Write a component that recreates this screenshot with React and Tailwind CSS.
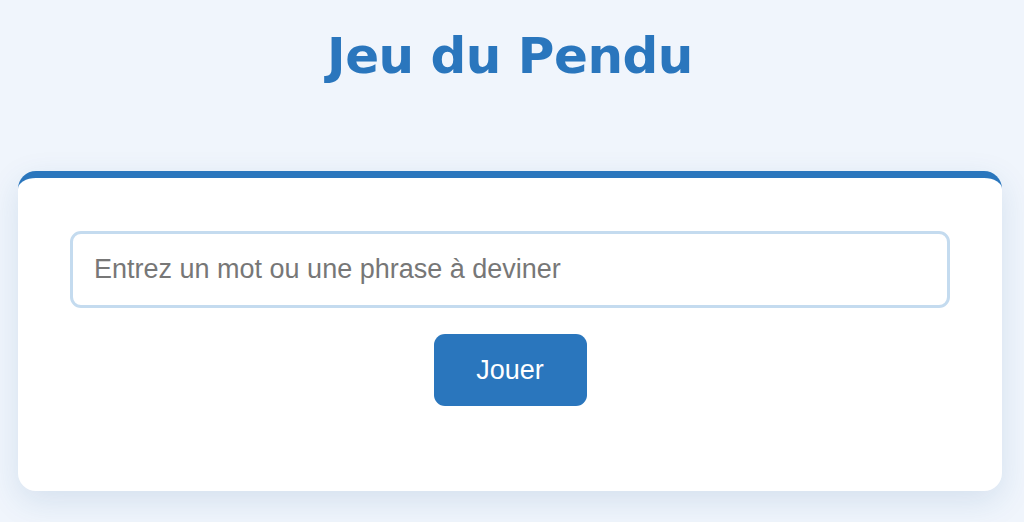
import React from 'react';

export default function App() {
  return (
    <div className="min-h-[522px] bg-[#f0f5fc] pl-[18px] pr-[22px] pt-[22px] font-['Liberation_Sans',Arial,sans-serif]">
      <h1 className="text-center text-[50px] leading-[68px] font-bold text-[#2a76bd] font-['DejaVu_Sans',Verdana,sans-serif] tracking-[-0.5px]">
        Jeu du Pendu
      </h1>
      <div className="mt-[81px] rounded-[18px] border-t-[7px] border-[#2a76bd] bg-white px-[52px] pt-[53px] pb-[85px] shadow-[0_10px_32px_rgba(30,90,150,0.13)]">
        <input
          type="text"
          placeholder="Entrez un mot ou une phrase à deviner"
          className="block w-full h-[77px] rounded-[11px] border-[3px] border-[#c4dbef] bg-white px-[21px] text-[27px] text-[#333] placeholder:text-[#777] outline-none"
        />
        <div className="mt-[26px] flex justify-center">
          <button className="w-[153px] h-[72px] rounded-[11px] bg-[#2a76bd] text-white text-[27px]">
            Jouer
          </button>
        </div>
      </div>
    </div>
  );
}
